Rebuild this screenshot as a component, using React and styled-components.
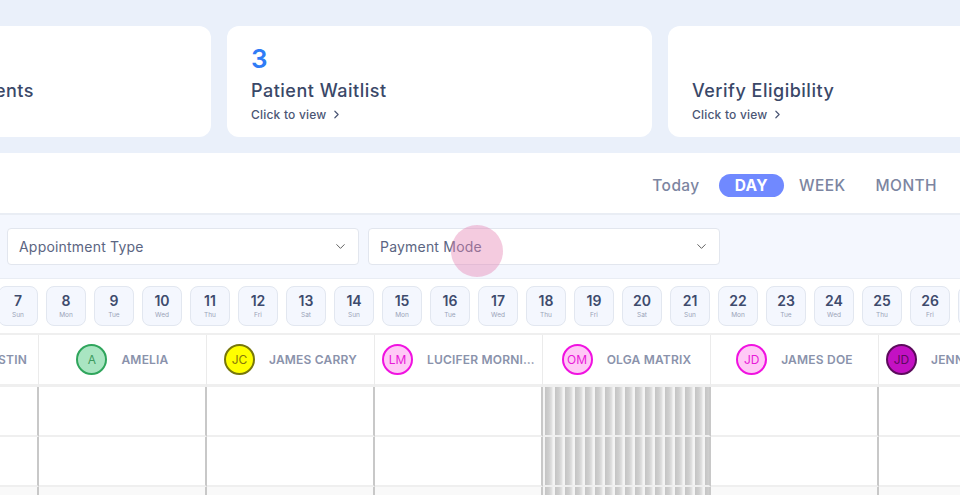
import styled, { createGlobalStyle } from "styled-components";
import { ChevronDown, ChevronRight } from "lucide-react";

const GlobalStyle = createGlobalStyle`
    html, body { margin: 0; padding: 0; background: #ffffff; }
    body { font-family: 'Inter', 'Noto Sans', sans-serif; overflow: hidden; }
`;

const Page = styled.div`
    width: 960px;
    height: 495px;
    overflow: hidden;
    position: relative;
    background: #ffffff;
`;

const Summary = styled.section`
    background: #eaf0fa;
    padding: 26px 0 16px;
    display: flex;
    gap: 16px;
    margin-left: -214px;
`;

const Card = styled.div`
    flex: 0 0 425px;
    height: 111px;
    box-sizing: border-box;
    background: #ffffff;
    border-radius: 12px;
    padding: 16px 24px 0;
    display: flex;
    flex-direction: column;
`;

const Count = styled.div`
    height: 33px;
    font-size: 26px;
    font-weight: 600;
    color: #2f7cf6;
    line-height: 33px;
`;

const CardTitle = styled.div`
    margin-top: 5px;
    font-size: 18px;
    font-weight: 500;
    color: #3a4868;
    letter-spacing: 0.5px;
    white-space: nowrap;
`;

const CardLink = styled.div`
    margin-top: 6px;
    display: flex;
    align-items: center;
    gap: 4px;
    font-size: 12px;
    font-weight: 500;
    color: #4b5675;
    letter-spacing: 0.2px;
`;

const TabBar = styled.div`
    height: 60px;
    display: flex;
    justify-content: flex-end;
    align-items: center;
    padding-right: 23px;
    padding-top: 4px;
    box-sizing: border-box;
`;

const Tab = styled.div`
    font-size: 15.5px;
    color: ${(p) => (p.$active ? "#ffffff" : "#7c85a1")};
    background: ${(p) => (p.$active ? "#7089ff" : "transparent")};
    border-radius: 12px;
    height: 23px;
    line-height: 23px;
    padding: 0 ${(p) => (p.$active ? "16px" : "0")};
    font-weight: ${(p) => (p.$active ? 700 : 500)};
    letter-spacing: 0.4px;
    margin-left: ${(p) => p.$gap || 0}px;
`;

const FilterBar = styled.div`
    position: relative;
    height: 66px;
    box-sizing: border-box;
    background: #f4f7fe;
    border-top: 2px solid #e9edf4;
    border-bottom: 1px solid #e9edf4;
    display: flex;
    align-items: center;
    gap: 9px;
    padding-left: 7px;
`;

const Select = styled.div`
    width: 352px;
    height: 37px;
    box-sizing: border-box;
    background: #ffffff;
    border: 1px solid #e2e6ee;
    border-radius: 4px;
    display: flex;
    align-items: center;
    justify-content: space-between;
    padding: 0 10px 0 11px;
    font-size: 14px;
    color: #5b6582;
    letter-spacing: 0.2px;
`;

const Ripple = styled.div`
    position: absolute;
    left: 451px;
    top: 10px;
    width: 52px;
    height: 52px;
    border-radius: 50%;
    background: rgba(228, 130, 178, 0.42);
    pointer-events: none;
`;

const DateRow = styled.div`
    height: 56px;
    box-sizing: border-box;
    display: flex;
    align-items: center;
    gap: 8px;
    margin-left: -2px;
    border-bottom: 2px solid #efefef;
`;

const DateChip = styled.div`
    flex: 0 0 40px;
    height: 40px;
    box-sizing: border-box;
    background: #f4f7fe;
    border: 1px solid #e2e7f0;
    border-radius: 8px;
    display: flex;
    flex-direction: column;
    align-items: center;
    justify-content: center;
    gap: 2px;
`;

const DateNum = styled.div`
    font-size: 14px;
    font-weight: 600;
    color: #3e4b6d;
    line-height: 16px;
`;

const DateDay = styled.div`
    font-size: 6.5px;
    color: #9aa3b8;
    line-height: 8px;
`;

const Grid = styled.div`
    display: grid;
    grid-template-columns: repeat(7, 168px);
    margin-left: -129px;
`;

const HeadCell = styled.div`
    height: 49px;
    border-right: 1px solid #ebebeb;
    display: flex;
    align-items: center;
    justify-content: ${(p) => (p.$end ? "flex-end" : "center")};
    padding-right: ${(p) => (p.$end ? "11px" : "0")};
    gap: 14px;
    border-bottom: 3px solid #efefef;
`;

const Avatar = styled.div`
    width: 31px;
    height: 31px;
    box-sizing: border-box;
    border-radius: 50%;
    background: ${(p) => p.$bg};
    border: 2px solid ${(p) => p.$border};
    color: ${(p) => p.$fg};
    font-size: 12px;
    display: flex;
    align-items: center;
    justify-content: center;
    flex-shrink: 0;
`;

const Name = styled.div`
    font-size: 12px;
    font-weight: 600;
    color: #8a92ab;
    white-space: nowrap;
    max-width: 108px;
    overflow: hidden;
    text-overflow: ellipsis;
    letter-spacing: 0.2px;
`;

const BodyCell = styled.div`
    height: 50px;
    box-sizing: border-box;
    border-right: 2px solid #c8c8c8;
    border-bottom: 2px solid #efefef;
    background: ${(p) =>
        p.$blocked
            ? "repeating-linear-gradient(90deg, #f4f4f4 0px, #f4f4f4 2px, #c4c4c4 2px, #cfcfcf 6px, #e2e2e2 9px, #f4f4f4 10px)"
            : p.$shade
            ? "#f9f9f9"
            : "#ffffff"};
`;

const cards = [
    { count: "", title: "Upcoming Appointments" },
    { count: "3", title: "Patient Waitlist" },
    { count: "", title: "Verify Eligibility" },
];

const dayNames = ["Sun", "Mon", "Tue", "Wed", "Thu", "Fri", "Sat"];
const dates = Array.from({ length: 21 }, (_, i) => ({
    num: 7 + i,
    day: dayNames[i % 7],
}));

const providers = [
    { initials: "", name: "JUSTIN", end: true },
    { initials: "A", name: "AMELIA", bg: "#a9e5c2", border: "#2fa55c", fg: "#3d9a5e" },
    { initials: "JC", name: "JAMES CARRY", bg: "#ffff00", border: "#77770a", fg: "#86780a" },
    { initials: "LM", name: "LUCIFER MORNINGSTAR", bg: "#ffc9f6", border: "#f012e0", fg: "#e81ad8" },
    { initials: "OM", name: "OLGA MATRIX", bg: "#ffc9f6", border: "#f012e0", fg: "#e81ad8", blocked: true },
    { initials: "JD", name: "JAMES DOE", bg: "#ffc9f6", border: "#f012e0", fg: "#e81ad8" },
    { initials: "JD", name: "JENNIFER DOUGLAS", bg: "#c311c3", border: "#5c0b5c", fg: "#5c0b5c" },
];

export default function App() {
    return (
        <Page>
            <GlobalStyle />
            <Summary>
                {cards.map((c) => (
                    <Card key={c.title}>
                        <Count>{c.count}</Count>
                        <CardTitle>{c.title}</CardTitle>
                        <CardLink>
                            Click to view <ChevronRight size={13} strokeWidth={2.2} />
                        </CardLink>
                    </Card>
                ))}
            </Summary>
            <TabBar>
                <Tab>Today</Tab>
                <Tab $active $gap={19}>DAY</Tab>
                <Tab $gap={15}>WEEK</Tab>
                <Tab $gap={30}>MONTH</Tab>
            </TabBar>
            <FilterBar>
                <Select>
                    Appointment Type
                    <ChevronDown size={15} strokeWidth={1.5} color="#555" />
                </Select>
                <Select>
                    Payment Mode
                    <ChevronDown size={15} strokeWidth={1.5} color="#555" />
                </Select>
                <Ripple />
            </FilterBar>
            <DateRow>
                {dates.map((d) => (
                    <DateChip key={d.num}>
                        <DateNum>{d.num}</DateNum>
                        <DateDay>{d.day}</DateDay>
                    </DateChip>
                ))}
            </DateRow>
            <Grid>
                {providers.map((p, i) => (
                    <HeadCell key={"h" + i} $end={p.end}>
                        {p.initials && (
                            <Avatar $bg={p.bg} $border={p.border} $fg={p.fg}>
                                {p.initials}
                            </Avatar>
                        )}
                        <Name>{p.name}</Name>
                    </HeadCell>
                ))}
                {[0, 1, 2].map((row) =>
                    providers.map((p, i) => (
                        <BodyCell key={row + "-" + i} $blocked={p.blocked} $shade={row === 2} />
                    ))
                )}
            </Grid>
        </Page>
    );
}
